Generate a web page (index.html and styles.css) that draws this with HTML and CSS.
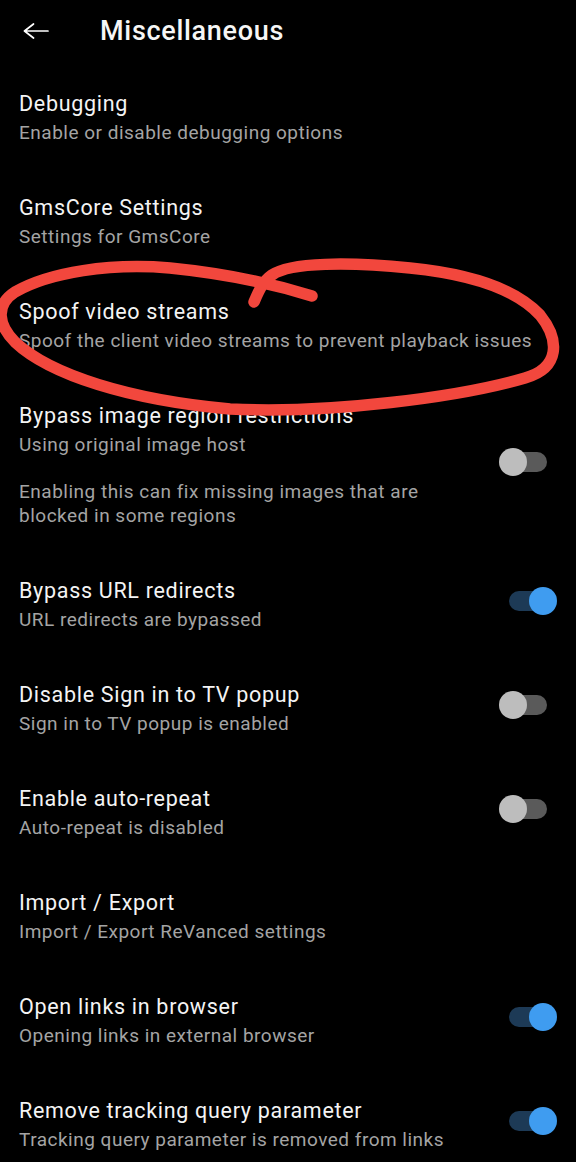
FILE: index.html
```html
<!DOCTYPE html>
<html>
<head>
<meta charset="utf-8">
<link rel="stylesheet" href="styles.css">
</head>
<body>
<div class="page">
  <header class="toolbar">
    <svg class="back" width="26" height="16" viewBox="0 0 26 16"><path d="M25 8 H1.5 M1.5 8 L10.5 1 M1.5 8 L10.5 15" fill="none" stroke="#fff" stroke-width="1.7" stroke-linecap="round" stroke-linejoin="round"/></svg>
    <h1 class="title">Miscellaneous</h1>
  </header>

  <div class="list">
    <div class="row">
      <div class="text"><div class="t">Debugging</div><div class="s">Enable or disable debugging options</div></div>
    </div>
    <div class="row">
      <div class="text"><div class="t">GmsCore Settings</div><div class="s">Settings for GmsCore</div></div>
    </div>
    <div class="row">
      <div class="text"><div class="t">Spoof video streams</div><div class="s">Spoof the client video streams to prevent playback issues</div></div>
    </div>
    <div class="row">
      <div class="text"><div class="t">Bypass image region restrictions</div><div class="s">Using original image host<br><br>Enabling this can fix missing images that are blocked in some regions</div></div>
      <div class="switch off"><span class="track"></span><span class="thumb"></span></div>
    </div>
    <div class="row">
      <div class="text"><div class="t">Bypass URL redirects</div><div class="s">URL redirects are bypassed</div></div>
      <div class="switch on"><span class="track"></span><span class="thumb"></span></div>
    </div>
    <div class="row">
      <div class="text"><div class="t">Disable Sign in to TV popup</div><div class="s">Sign in to TV popup is enabled</div></div>
      <div class="switch off"><span class="track"></span><span class="thumb"></span></div>
    </div>
    <div class="row">
      <div class="text"><div class="t">Enable auto-repeat</div><div class="s">Auto-repeat is disabled</div></div>
      <div class="switch off"><span class="track"></span><span class="thumb"></span></div>
    </div>
    <div class="row">
      <div class="text"><div class="t">Import / Export</div><div class="s">Import / Export ReVanced settings</div></div>
    </div>
    <div class="row">
      <div class="text"><div class="t">Open links in browser</div><div class="s">Opening links in external browser</div></div>
      <div class="switch on"><span class="track"></span><span class="thumb"></span></div>
    </div>
    <div class="row">
      <div class="text"><div class="t">Remove tracking query parameter</div><div class="s">Tracking query parameter is removed from links</div></div>
      <div class="switch on"><span class="track"></span><span class="thumb"></span></div>
    </div>
  </div>

  <svg class="scribble" width="576" height="420" viewBox="0 0 576 420">
    <path d="M312 296 C280 286 230 274 170 268 C110 263 50 272 15 292 C-5 305 -2 325 15 342 C50 375 130 400 230 409 C330 414 460 397 525 378 C560 368 560 340 540 315 C515 288 470 274 410 268 C350 262 290 262 272 275 C262 282 258 293 254 302" fill="none" stroke="#f2473d" stroke-width="11.5" stroke-linecap="round" stroke-linejoin="round"/>
  </svg>
</div>
</body>
</html>
```

FILE: styles.css
```css
html, body {
  margin: 0;
  padding: 0;
  background: #000;
}
body {
  font-family: Roboto, "Noto Sans", "Liberation Sans", sans-serif;
  color: #f4f4f4;
}
.page {
  position: relative;
  width: 576px;
  min-height: 1162px;
  overflow: hidden;
}
.toolbar {
  display: flex;
  align-items: center;
  height: 32px;
  padding: 14.5px 0 19.2px 0;
}
.back {
  margin-left: 23px;
  flex: none;
}
.title {
  margin: 0 0 0 51px;
  font-size: 27px;
  font-weight: 500;
  line-height: 32px;
  letter-spacing: 0.7px;
  color: #f6f6f6;
}
.list {
  display: flex;
  flex-direction: column;
}
.row {
  display: flex;
  align-items: center;
  padding: 24.8px 19px 24.8px 19px;
}
.text {
  flex: 1;
  min-width: 0;
}
.t {
  font-size: 21.5px;
  line-height: 28px;
  letter-spacing: 0.7px;
  color: #f4f4f4;
}
.s {
  margin-top: 3px;
  font-size: 19px;
  line-height: 23.4px;
  letter-spacing: 0.5px;
  color: #a4a4a4;
}
.switch {
  position: relative;
  flex: none;
  width: 58px;
  height: 28px;
  margin-bottom: 5px;
  margin-left: 10px;
}
.track {
  position: absolute;
  left: 10px;
  top: 4px;
  width: 38px;
  height: 20px;
  border-radius: 10px;
}
.thumb {
  position: absolute;
  top: 0;
  width: 28px;
  height: 28px;
  border-radius: 50%;
}
.switch.off .track { background: #5a5a5a; }
.switch.off .thumb { left: 0; background: #bdbdbd; }
.switch.on .track { background: #1d3a56; }
.switch.on .thumb { left: 30px; background: #3f9cf0; }
.scribble {
  position: absolute;
  left: 0;
  top: 0;
  pointer-events: none;
}
```
